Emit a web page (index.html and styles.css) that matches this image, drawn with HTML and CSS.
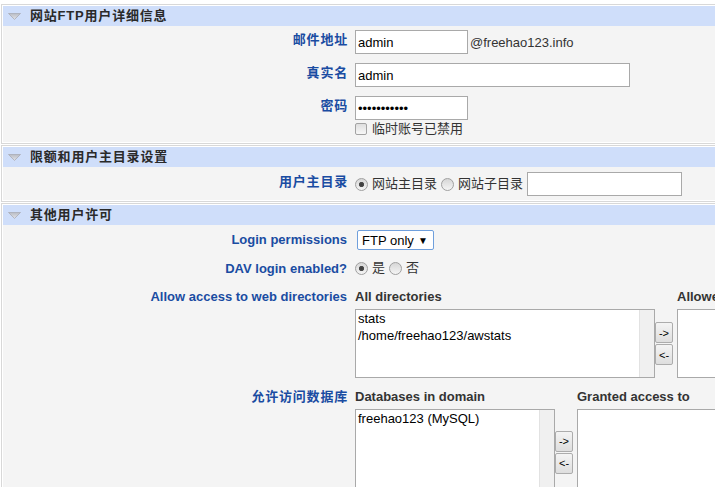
FILE: index.html
```html
<!DOCTYPE html>
<html lang="zh-CN">
<head>
<meta charset="utf-8">
<title>FTP 用户</title>
<link rel="stylesheet" href="styles.css">
</head>
<body>
<div class="page">
  <section class="panel">
    <div class="panel-head">
      <svg class="tri" viewBox="0 0 13 7" width="13" height="7"><defs><linearGradient id="g1" x1="0" y1="0" x2="0" y2="1"><stop offset="0" stop-color="#b9bcc4"/><stop offset="1" stop-color="#e2e3e8"/></linearGradient></defs><polygon points="0.5,0.5 12.5,0.5 6.5,6.5" fill="url(#g1)" stroke="#a9acb5" stroke-width="0.8"/></svg>
      <span>网站FTP用户详细信息</span>
    </div>
    <div class="panel-body body-1">
      <div class="row gap9">
        <label class="lbl cjk pt2">邮件地址</label>
        <div class="field"><input class="txt w-short" type="text" value="admin"><span class="suffix">@freehao123.info</span></div>
      </div>
      <div class="row gap9">
        <label class="lbl cjk pt2">真实名</label>
        <div class="field"><input class="txt w-long" type="text" value="admin"></div>
      </div>
      <div class="row">
        <label class="lbl cjk pt2">密码</label>
        <div class="field"><input class="txt w-short" type="password" value="aaaaaaaaaaa"></div>
      </div>
      <div class="row sub">
        <span></span>
        <div class="field"><input class="chk" type="checkbox"><span class="opt-text">临时账号已禁用</span></div>
      </div>
    </div>
  </section>

  <section class="panel">
    <div class="panel-head">
      <svg class="tri" viewBox="0 0 13 7" width="13" height="7"><defs><linearGradient id="g2" x1="0" y1="0" x2="0" y2="1"><stop offset="0" stop-color="#b9bcc4"/><stop offset="1" stop-color="#e2e3e8"/></linearGradient></defs><polygon points="0.5,0.5 12.5,0.5 6.5,6.5" fill="url(#g2)" stroke="#a9acb5" stroke-width="0.8"/></svg>
      <span>限额和用户主目录设置</span>
    </div>
    <div class="panel-body body-2">
      <div class="row">
        <label class="lbl cjk pt2">用户主目录</label>
        <div class="field radios">
          <input class="rad" type="radio" name="home" checked><span class="opt-text">网站主目录</span>
          <input class="rad" type="radio" name="home"><span class="opt-text">网站子目录</span>
          <input class="txt w-dir" type="text" value="">
        </div>
      </div>
    </div>
  </section>

  <section class="panel">
    <div class="panel-head">
      <svg class="tri" viewBox="0 0 13 7" width="13" height="7"><defs><linearGradient id="g3" x1="0" y1="0" x2="0" y2="1"><stop offset="0" stop-color="#b9bcc4"/><stop offset="1" stop-color="#e2e3e8"/></linearGradient></defs><polygon points="0.5,0.5 12.5,0.5 6.5,6.5" fill="url(#g3)" stroke="#a9acb5" stroke-width="0.8"/></svg>
      <span>其他用户许可</span>
    </div>
    <div class="panel-body body-3">
      <div class="row">
        <label class="lbl pt2">Login permissions</label>
        <div class="field"><div class="select"><span>FTP only</span><span class="caret">▼</span></div></div>
      </div>
      <div class="row r-dav">
        <label class="lbl">DAV login enabled?</label>
        <div class="field radios">
          <input class="rad" type="radio" name="dav" checked><span class="opt-text">是</span>
          <input class="rad" type="radio" name="dav"><span class="opt-text">否</span>
        </div>
      </div>
      <div class="row r-dirs">
        <label class="lbl">Allow access to web directories</label>
        <div class="dual dual-dirs">
          <div class="hd">All directories</div>
          <div class="hd hd2">Allowed access to</div>
          <div class="lst lst1 h-dirs">
            <div class="opts"><div>stats</div><div>/home/freehao123/awstats</div></div>
            <div class="track"></div>
          </div>
          <div class="arrows"><button class="btn">-&gt;</button><button class="btn">&lt;-</button></div>
          <div class="lst lst2 h-dirs"><div class="opts"></div></div>
        </div>
      </div>
      <div class="row r-db">
        <label class="lbl cjk">允许访问数据库</label>
        <div class="dual dual-db">
          <div class="hd">Databases in domain</div>
          <div class="hd hd2">Granted access to</div>
          <div class="lst lst1 h-db">
            <div class="opts"><div>freehao123 (MySQL)</div></div>
            <div class="track"></div>
          </div>
          <div class="arrows"><button class="btn">-&gt;</button><button class="btn">&lt;-</button></div>
          <div class="lst lst2 h-db"><div class="opts"></div></div>
        </div>
      </div>
    </div>
  </section>
</div>
</body>
</html>
```

FILE: styles.css
```css
html, body {
  margin: 0;
  padding: 0;
  overflow: hidden;
  background: #ffffff;
}

body {
  font-family: "Liberation Sans", "Noto Sans CJK SC", sans-serif;
  font-size: 13px;
  color: #333333;
}

.page {
  width: 860px;
  padding: 4px 0 0 1px;
}

.panel {
  border: 1px solid #d8d8d8;
  padding: 1px;
  background: #ffffff;
}

.panel + .panel {
  margin-top: 1px;
}

.panel-head {
  height: 20px;
  background: #cfdefa;
  display: flex;
  align-items: center;
  font-weight: bold;
  color: #2a2a2a;
  line-height: 16px;
  letter-spacing: 0.8px;
}

.tri {
  display: block;
  width: 13px;
  height: 7px;
  margin: 1px 9px 0 5px;
}

.panel-body {
  background: #f4f4f4;
}

.body-1 { padding: 4px 0 6px; }
.body-2 { padding: 5px 0 4px; }
.body-3 { padding: 5px 0 20px; }

.row {
  display: grid;
  grid-template-columns: 344px 1fr;
  column-gap: 8px;
  align-items: start;
}

.gap9 { margin-bottom: 9px; }
.sub { margin-top: 2px; }
.r-dav { margin-top: 11px; }
.r-dirs { margin-top: 12px; }
.r-db { margin-top: 11px; }

.lbl {
  text-align: right;
  font-weight: bold;
  color: #1a4ca2;
  line-height: 16px;
  white-space: nowrap;
}

.lbl.cjk {
  letter-spacing: 0.8px;
  margin-right: -1px;
}

.pt2 { padding-top: 2px; }

.field {
  display: flex;
  align-items: center;
  min-height: 14px;
}

.txt {
  box-sizing: border-box;
  height: 24px;
  margin: 0;
  border: 1px solid #a9a9a9;
  background: #ffffff;
  padding: 0 2px;
  font-family: "Liberation Sans", sans-serif;
  font-size: 13px;
  color: #000000;
  outline: none;
}

.w-short { width: 113px; }
.w-long { width: 275px; }
.w-dir { width: 155px; }

.suffix {
  margin-left: 2px;
  color: #333333;
}

.chk {
  -webkit-appearance: none;
  appearance: none;
  box-sizing: border-box;
  width: 12px;
  height: 12px;
  margin: 0 5px 0 0;
  border: 1px solid #a3a3a3;
  border-radius: 2px;
  background: linear-gradient(#dedede, #f7f7f7);
}

.opt-text {
  color: #333333;
  line-height: 14px;
}

.rad {
  -webkit-appearance: none;
  appearance: none;
  box-sizing: border-box;
  width: 13px;
  height: 13px;
  margin: 0 4px 0 0;
  border: 1px solid #a0a0a0;
  border-radius: 50%;
  background: linear-gradient(#d6d6d6, #f5f5f5);
}

.rad:checked {
  background: radial-gradient(circle at center, #3c3c3c 0, #4a4a4a 2.2px, rgba(80,80,80,0) 3px), linear-gradient(#d6d6d6, #f5f5f5);
}

.radios .opt-text { margin-right: 4px; }

.select {
  box-sizing: border-box;
  width: 77px;
  height: 20px;
  margin-left: 2px;
  border: 1px solid #6f9fdc;
  border-radius: 2px;
  background: #ffffff;
  display: flex;
  align-items: center;
  justify-content: space-between;
  padding: 0 5px 0 4px;
  color: #000000;
}

.caret {
  font-size: 10px;
  color: #000000;
}

.dual {
  display: grid;
  grid-template-rows: 16px auto;
  row-gap: 4px;
  align-items: start;
}

.dual-dirs { grid-template-columns: 300px 18px 300px; }
.dual-db { grid-template-columns: 200px 18px 300px; }

.hd {
  font-weight: bold;
  color: #333333;
  line-height: 16px;
  white-space: nowrap;
  grid-row: 1;
  grid-column: 1;
}

.hd2 {
  grid-column: 3;
  margin-left: 4px;
}

.lst {
  box-sizing: border-box;
  border: 1px solid #a9a9a9;
  background: #ffffff;
  display: flex;
  grid-row: 2;
}

.lst1 { grid-column: 1; }
.lst2 { grid-column: 3; margin-left: 4px; }

.h-dirs { height: 69px; }
.h-db { height: 86px; }

.opts {
  flex: 1;
  padding: 0 2px;
  line-height: 17px;
  color: #000000;
  white-space: nowrap;
}

.track {
  width: 14px;
  background: #f0f0f0;
  border-left: 1px solid #e2e2e2;
}

.arrows {
  grid-row: 2;
  grid-column: 2;
  align-self: center;
  display: flex;
  flex-direction: column;
  gap: 1px;
}

.btn {
  box-sizing: border-box;
  width: 18px;
  height: 21px;
  margin: 0;
  padding: 0;
  border: 1px solid #acacac;
  border-radius: 2px;
  background: linear-gradient(#f4f4f4, #dedede);
  font-family: "Liberation Sans", sans-serif;
  font-size: 11px;
  color: #000000;
}
```
